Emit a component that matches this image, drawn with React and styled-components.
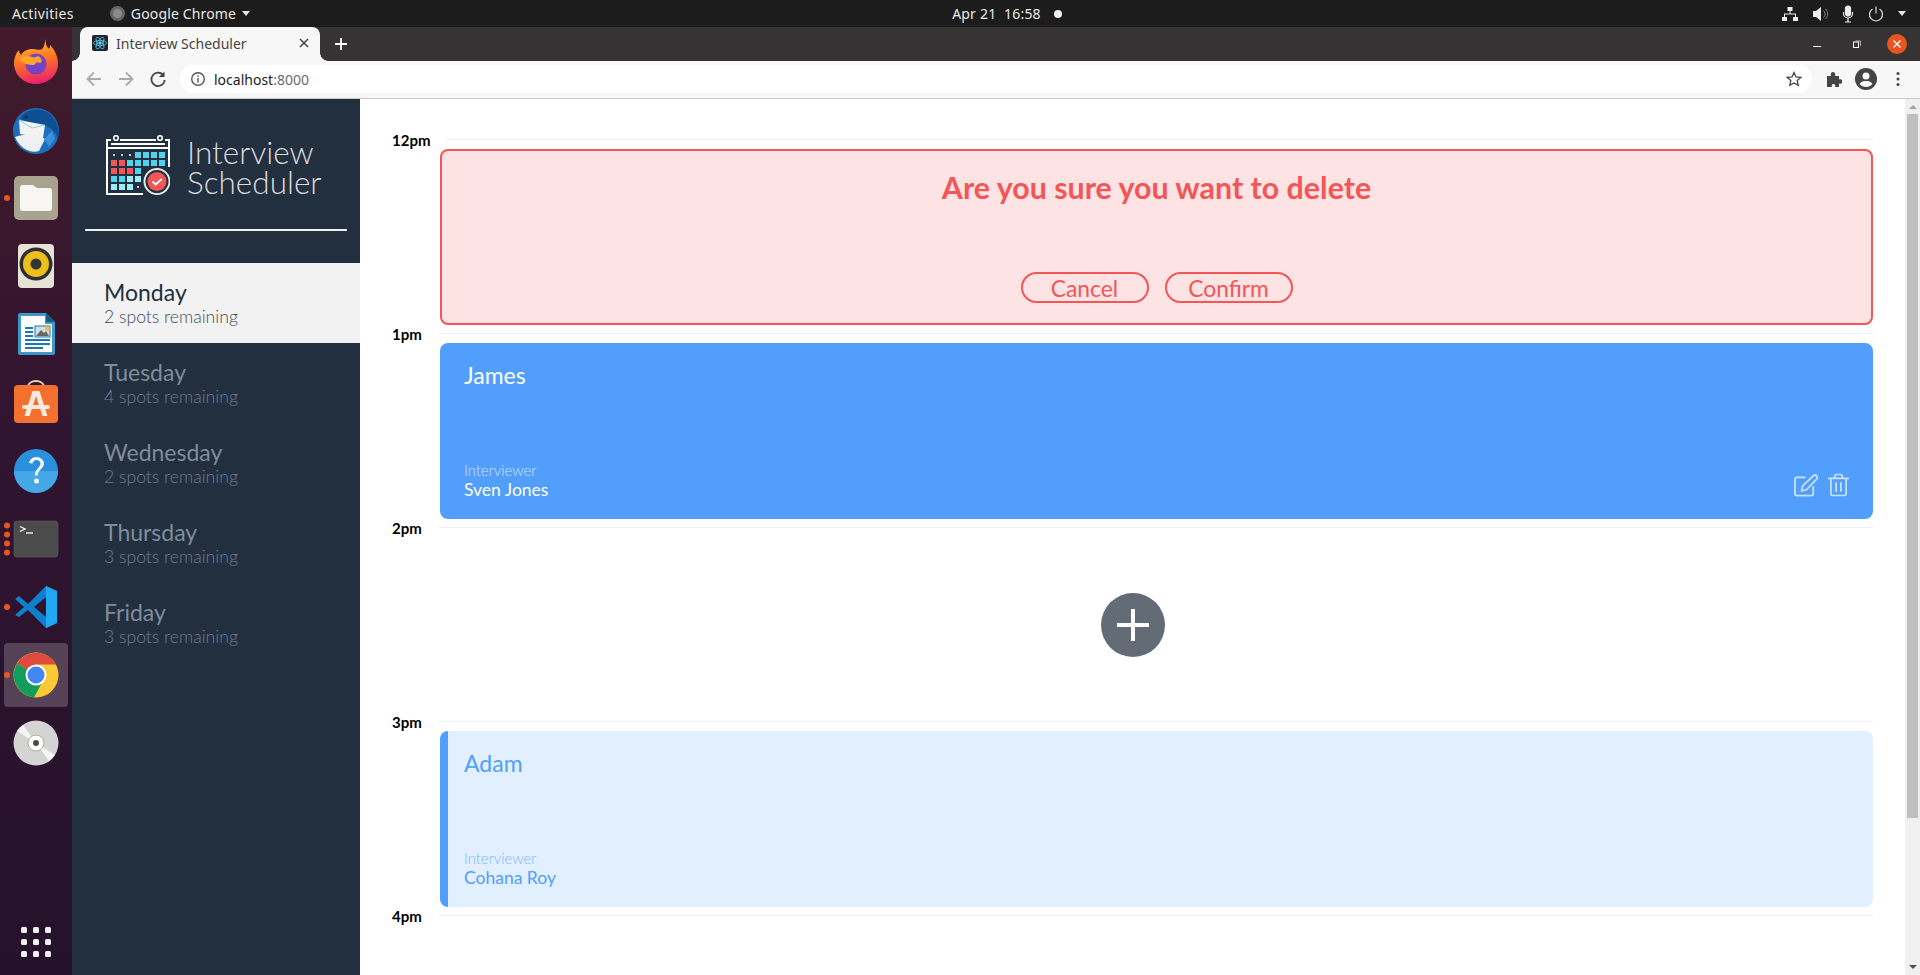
import React from "react";
import styled, { createGlobalStyle } from "styled-components";

const GlobalStyle = createGlobalStyle`
  html, body {
    margin: 0;
    padding: 0;
    height: 100%;
    overflow: hidden;
    background: #fff;
  }
  * { box-sizing: border-box; }
`;

const uiFont = `"Noto Sans", "Open Sans", sans-serif`;
const appFont = `Lato, "Noto Sans", sans-serif`;

const Desktop = styled.div`
  width: 1920px;
  height: 975px;
  display: flex;
  flex-direction: column;
  overflow: hidden;
`;

/* gnome top bar */
const TopBar = styled.div`
  height: 27px;
  background: #1c1c1c;
  color: #e8e8e8;
  font: 14px ${uiFont};
  display: grid;
  grid-template-columns: 1fr auto 1fr;
  align-items: center;
  padding: 0 12px;
  flex: none;
`;
const TopLeft = styled.div`
  display: flex;
  align-items: center;
  gap: 36px;
`;
const Activities = styled.span`
  letter-spacing: 0.35px;
`;
const AppName = styled.div`
  display: flex;
  align-items: center;
  gap: 6px;
  letter-spacing: 0.15px;
`;
const ChromeMono = styled.span`
  width: 15px;
  height: 15px;
  border-radius: 50%;
  background: #8a8a8a;
  border: 3px solid #666;
`;
const Caret = styled.span`
  width: 0;
  height: 0;
  border-left: 4.5px solid transparent;
  border-right: 4.5px solid transparent;
  border-top: 5px solid #e8e8e8;
`;
const Clock = styled.div`
  display: flex;
  align-items: center;
  gap: 8px;
  padding-left: 94px;
  letter-spacing: 0.2px;
  white-space: pre;
`;
const ClockDot = styled.span`
  width: 8px;
  height: 8px;
  margin-left: 5px;
  border-radius: 50%;
  background: #eee;
`;
const Tray = styled.div`
  display: flex;
  justify-content: flex-end;
  align-items: center;
  gap: 14px;
  padding-right: 2px;
`;

const Body = styled.div`
  flex: 1;
  display: flex;
  min-height: 0;
`;

/* launcher on the left */
const Dock = styled.div`
  width: 72px;
  flex: none;
  background: linear-gradient(180deg, #421a2b 0%, #301430 45%, #25122a 100%);
  display: flex;
  flex-direction: column;
  align-items: center;
  padding-top: 3px;
`;
const DockItem = styled.div`
  width: 64px;
  height: 64px;
  margin-bottom: 4.1px;
  flex: none;
  position: relative;
  display: flex;
  align-items: center;
  justify-content: center;
  border-radius: 4px;
  background: ${(p) => (p.$active ? "rgba(255,255,255,0.2)" : "transparent")};
`;
const RunDots = styled.div`
  position: absolute;
  left: 0;
  top: 50%;
  transform: translateY(-50%);
  display: flex;
  flex-direction: column;
  gap: 3px;
`;
const RunDot = styled.span`
  width: 6px;
  height: 6px;
  border-radius: 50%;
  background: #e95420;
`;
const AppGrid = styled.div`
  margin-top: auto;
  margin-bottom: 18px;
  display: grid;
  grid-template-columns: repeat(3, 6px);
  gap: 6px;
`;
const AppGridDot = styled.span`
  width: 6px;
  height: 6px;
  border-radius: 1.5px;
  background: #efefef;
`;

const Browser = styled.div`
  flex: 1;
  min-width: 0;
  display: flex;
  flex-direction: column;
`;
const TabStrip = styled.div`
  height: 34px;
  flex: none;
  background: #353333;
  display: flex;
  align-items: flex-end;
  padding-left: 8px;
`;
const Tab = styled.div`
  width: 240px;
  height: 34px;
  position: relative;
  background: #f7f7f7;
  border-radius: 8px 8px 0 0;
  display: flex;
  align-items: center;
  padding: 0 11px 2px 12px;
  color: #444;
  font: 14px ${uiFont};

  &::before,
  &::after {
    content: "";
    position: absolute;
    bottom: 0;
    width: 8px;
    height: 8px;
  }
  &::before {
    left: -8px;
    background: radial-gradient(circle at 0 0, transparent 7.5px, #f7f7f7 8px);
  }
  &::after {
    right: -8px;
    background: radial-gradient(circle at 100% 0, transparent 7.5px, #f7f7f7 8px);
  }
`;
const TabIcon = styled.span`
  width: 16px;
  height: 16px;
  border-radius: 2px;
  background: #20232a;
  margin-right: 8px;
  display: flex;
`;
const TabTitle = styled.span`
  flex: 1;
`;
const NewTab = styled.div`
  margin: 0 0 0 15px;
  align-self: center;
  display: flex;
`;
const WindowButtons = styled.div`
  margin-left: auto;
  align-self: center;
  display: flex;
  align-items: center;
  gap: 32px;
  padding-right: 13px;
`;
const CloseCircle = styled.span`
  width: 20px;
  height: 20px;
  margin-left: -6px;
  border-radius: 50%;
  background: #e95420;
  display: flex;
  align-items: center;
  justify-content: center;
`;
const Toolbar = styled.div`
  height: 38px;
  flex: none;
  background: #f7f7f7;
  border-bottom: 1px solid #c9c9c9;
  display: flex;
  align-items: center;
  padding: 0 0 1px 12px;
`;
const NavIcons = styled.div`
  display: flex;
  gap: 12px;
  margin-right: 12px;
`;
const AddressBar = styled.div`
  width: 1632px;
  height: 28px;
  border-radius: 14px;
  background: #fff;
  display: flex;
  align-items: center;
  padding: 0 10px;
  font: 14px ${uiFont};
  color: #222;
`;
const Host = styled.span`
  margin-left: 8px;
`;
const Port = styled.span`
  color: #6a6a6a;
`;
const Star = styled.span`
  margin-left: auto;
  display: flex;
`;
const ToolIcons = styled.div`
  display: flex;
  align-items: center;
  gap: 13px;
  margin-left: 14px;
`;

const Page = styled.div`
  flex: 1;
  min-height: 0;
  display: flex;
  background: #fff;
`;

/* app sidebar */
const Sidebar = styled.aside`
  width: 288px;
  flex: none;
  background: #222f3e;
  display: flex;
  flex-direction: column;
`;
const Brand = styled.div`
  margin: 0 13px;
  height: 132px;
  padding: 36px 0 0 21px;
  display: flex;
  align-items: flex-start;
  gap: 17px;
  border-bottom: 2px solid #f0f0f0;
`;
const BrandText = styled.div`
  font: 300 31.5px/30px ${appFont};
  color: #d8dadd;
  padding-top: 2px;
`;
const DayList = styled.ul`
  list-style: none;
  margin: 32px 0 0;
  padding: 0;
`;
const Day = styled.li`
  height: 80px;
  padding: 15px 0 0 32px;
  background: ${(p) => (p.$selected ? "#f2f2f2" : "transparent")};
  color: ${(p) => (p.$selected ? "#222f3e" : "#7f8c9c")};
`;
const DayName = styled.div`
  font: 400 23px/28px ${appFont};
`;
const Spots = styled.div`
  font: 300 17.6px/21px ${appFont};
  opacity: 0.85;
`;

/* schedule */
const Schedule = styled.main`
  flex: 1;
  min-width: 0;
  padding: 40px 32px 0 32px;
`;
const Slot = styled.section`
  height: 194px;
`;
const SlotHeader = styled.header`
  height: 10px;
  display: flex;
  align-items: flex-start;
`;
const Time = styled.h4`
  width: ${(p) => (p.$wide ? "55px" : "47px")};
  margin: -9px 0 0;
  font: 700 15px/20px ${appFont};
  color: #000;
`;
const Separator = styled.hr`
  flex: 1;
  margin: 0;
  border: 0;
  border-top: 1px solid #f0f0f0;
`;
const Card = styled.article`
  margin-left: 48px;
  height: 176px;
  border-radius: 8px;
`;
const ConfirmCard = styled(Card)`
  background: #fde3e3;
  border: 2px solid #f25656;
  color: #f25656;
  padding: 18px 0 0;
  display: flex;
  flex-direction: column;
  align-items: center;
`;
const ConfirmTitle = styled.h1`
  margin: 0;
  font: 700 30.4px/36px ${appFont};
`;
const ConfirmActions = styled.div`
  margin-top: auto;
  margin-bottom: 20px;
  display: flex;
  gap: 16px;
`;
const PillButton = styled.button`
  width: 128px;
  height: 31px;
  padding: 0;
  border: 2px solid #f25656;
  border-radius: 16px;
  background: transparent;
  color: #f25656;
  font: 400 22.8px/26px ${appFont};
`;
const BookedCard = styled(Card)`
  background: ${(p) => (p.$focused ? "#519efd" : "#e2effe")};
  color: ${(p) => (p.$focused ? "#fff" : "#519efd")};
  border-left: ${(p) => (p.$focused ? "0" : "8px solid #519efd")};
  padding: 18px 16px 18px ${(p) => (p.$focused ? "24px" : "16px")};
  display: flex;
  flex-direction: column;
  position: relative;
`;
const Student = styled.h2`
  margin: 0;
  font: 400 23px/28px ${appFont};
`;
const InterviewerBlock = styled.div`
  margin-top: auto;
`;
const InterviewerLabel = styled.div`
  font: 300 14.8px/20px ${appFont};
  opacity: 0.7;
`;
const InterviewerName = styled.div`
  font: 400 17.5px/20px ${appFont};
  padding-bottom: 1px;
`;
const CardActions = styled.div`
  position: absolute;
  right: 24px;
  bottom: 22px;
  display: flex;
  align-items: center;
  gap: 8px;
`;
const EmptySlotBody = styled.div`
  margin-left: 48px;
  height: 176px;
  display: flex;
  justify-content: center;
  align-items: center;
  padding-right: 48px;
`;
const AddCircle = styled.div`
  width: 64px;
  height: 64px;
  border-radius: 50%;
  background: #636b76;
  display: flex;
  align-items: center;
  justify-content: center;
`;

const Scrollbar = styled.div`
  width: 15px;
  flex: none;
  background: #f0f0f0;
  display: flex;
  flex-direction: column;
  align-items: center;
`;
const ScrollArrow = styled.span`
  width: 0;
  height: 0;
  border-left: 4px solid transparent;
  border-right: 4px solid transparent;
  ${(p) =>
    p.$down
      ? `margin: auto 0 6px; border-top: 4px solid #505050;`
      : `margin-top: 6px; border-bottom: 4px solid #a3a3a3;`}
`;
const ScrollThumb = styled.div`
  width: 11px;
  height: 704px;
  margin-top: 5px;
  background: #bfbfbf;
`;

const Firefox = () => (
  <svg width="46" height="46" viewBox="0 0 46 46">
    <defs>
      <linearGradient id="ff" x1="0.3" y1="0" x2="0.5" y2="1">
        <stop offset="0" stopColor="#ffc02e" />
        <stop offset="0.45" stopColor="#ff7a22" />
        <stop offset="1" stopColor="#ea1f6e" />
      </linearGradient>
    </defs>
    <path d="M33 0c-1 4 0 7 3 10 1-2 1-3 1-4 5 5 8 12 8 19 0 11-10 20-22 20S1 36 1 24c0-5 2-10 5-13 0 2 1 4 2 5 2-4 7-6 11-6 6 0 10 3 12-3 .5-2 1-5 2-7z" fill="url(#ff)" />
    <circle cx="23" cy="25" r="10.500" fill="#7542c8" />
    <path d="M6 20c4-3 9-4 13-2 2 1 4 0 6-1 4 2 5 6 2 7-3-2-4 0-6 2-5 0-11-1-15-6z" fill="#ffa52a" />
  </svg>
);
const Thunderbird = () => (
  <svg width="50" height="50" viewBox="0 0 50 50">
    <circle cx="25" cy="26" r="23" fill="#1d6fbd" />
    <path d="M9 13C15 4 30 1 40 10 46 16 49 25 47 33 43 24 34 18 24 18 18 18 12 16 9 13z" fill="#0c4f95" />
    <circle cx="15" cy="12" r="1.200" fill="#111" />
    <path d="M8 15l26 5-2 13L9 29z" fill="#f3f3f3" />
    <path d="M8 15l13 8 13-3" fill="none" stroke="#9cc" strokeWidth="1" />
    <path d="M4 32c8-3 22-4 30 2l-6 12C18 49 8 42 4 32z" fill="#eef0f2" />
    <path d="M33 34l8-8 3 8-6 8z" fill="#3a8fdc" />
  </svg>
);
const Files = () => (
  <svg width="46" height="46" viewBox="0 0 46 46">
    <rect x="1" y="1" width="44" height="44" rx="5" fill="#a9a28f" />
    <path d="M7 12c0-1 1-2 2-2h11l4 3h13c1 0 2 1 2 2v19c0 1-1 2-2 2H9c-1 0-2-1-2-2z" fill="#f7f6f3" />
  </svg>
);
const Rhythmbox = () => (
  <svg width="46" height="46" viewBox="0 0 46 46">
    <rect x="5" y="1" width="36" height="44" rx="4" fill="#e6e2d6" />
    <circle cx="23" cy="21" r="16.500" fill="#2f2f2f" />
    <circle cx="23" cy="21" r="13" fill="#edbf1c" />
    <circle cx="23" cy="21" r="5.500" fill="#333" />
  </svg>
);
const Writer = () => (
  <svg width="46" height="46" viewBox="0 0 46 46">
    <path d="M5 4c0-1 1-2 2-2h26l9 9v31c0 1-1 2-2 2H7c-1 0-2-1-2-2z" fill="#3d98c9" />
    <path d="M8 5h24v8h7v28H8z" fill="#fff" />
    <path d="M33 2l9 9h-9z" fill="#0f5e8c" />
    <path d="M12 16h8v2h-8zM12 20h8v2h-8zM12 24h8v2h-8zM12 28h25v2H12zM12 32h25v2H12zM12 36h18v2H12z" fill="#1878b3" />
    <rect x="22" y="15" width="15" height="11" fill="#d6dde0" stroke="#1878b3" strokeWidth="1" />
    <path d="M23 25l5-6 3 3 2-2 3 5z" fill="#666" />
    <rect x="32" y="15.500" width="4.500" height="4" fill="#eec33c" />
  </svg>
);
const Software = () => (
  <svg width="46" height="46" viewBox="0 0 46 46">
    <path d="M15 8c0-8 16-8 16 0" fill="none" stroke="#f2cfa9" strokeWidth="1.800" />
    <rect x="1" y="6" width="44" height="38" rx="4" fill="#f4702f" />
    <path d="M19.500 12h7l8 25h-5l-6.500-20-6.500 20h-5z" fill="#fbe9df" />
    <rect x="9" y="26" width="28" height="4" rx="2" fill="#fbe9df" />
  </svg>
);
const Help = () => (
  <svg width="46" height="46" viewBox="0 0 46 46">
    <circle cx="23" cy="23" r="22" fill="#2a8fdc" />
    <path d="M1 23a22 22 0 0 0 44 0z" fill="#45a7e6" />
    <path d="M16 15c1-4 4-6 7.500-6 4 0 7.500 3 7.500 6.500 0 5-6 6-6.500 12h-2.500c0-7 5.500-8 5.500-12 0-2-2-3.500-4-3.500s-3.500 1-4 3.500z" fill="#f4f9fd" />
    <circle cx="23.500" cy="33" r="2.500" fill="#f4f9fd" />
  </svg>
);
const Terminal = () => (
  <svg width="46" height="46" viewBox="0 0 46 46">
    <rect x="1" y="5" width="44" height="36" rx="3" fill="#4b4b4b" stroke="#666" strokeWidth="0.500" />
    <path d="M7 10.500l5 2.500-5 2.500" fill="none" stroke="#fff" strokeWidth="1.300" />
    <path d="M13 17h7" stroke="#fff" strokeWidth="1.300" />
  </svg>
);
const VSCode = () => (
  <svg width="46" height="46" viewBox="0 0 46 46">
    <path d="M33 2l11 5v32l-11 5L15 26 6 33l-4-2 9-8-9-8 4-3 9 8z" fill="#0f7fcc" />
    <path d="M33 2l11 5v32l-11 5z" fill="#20a9f2" />
    <path d="M33 13v20l-12-10z" fill="#2f1430" />
  </svg>
);
const ChromeLogo = () => (
  <svg width="46" height="46" viewBox="0 0 46 46">
    <circle cx="23" cy="23" r="22.500" fill="#fcc934" />
    <path d="M23 23L4 11.500A22.500 22.500 0 0 1 43 12.500H23z" fill="#dd4b3e" />
    <path d="M23 23L4 11.500A22.500 22.500 0 0 0 21 45.400L32 25z" fill="#129e5a" />
    <circle cx="23" cy="23" r="10.500" fill="#fff" />
    <circle cx="23" cy="23" r="8.500" fill="#4285f4" />
  </svg>
);
const Disc = () => (
  <svg width="46" height="46" viewBox="0 0 46 46">
    <circle cx="23" cy="23" r="22.500" fill="#d4d4d4" />
    <path d="M23 23L4 11a22.500 22.500 0 0 1 6-6zM23 23l19 12a22.500 22.500 0 0 1-6 6z" fill="#f6f6f6" />
    <circle cx="23" cy="23" r="8" fill="#fff" stroke="#b3a99a" />
    <circle cx="23" cy="23" r="3" fill="#4a4a4a" />
  </svg>
);

const ReactTab = () => (
  <svg width="16" height="16" viewBox="0 0 16 16" fill="none" stroke="#61dafb" strokeWidth="0.700">
    <ellipse cx="8" cy="8" rx="6.500" ry="2.600" />
    <ellipse cx="8" cy="8" rx="6.500" ry="2.600" transform="rotate(60 8 8)" />
    <ellipse cx="8" cy="8" rx="6.500" ry="2.600" transform="rotate(120 8 8)" />
    <circle cx="8" cy="8" r="1.300" fill="#61dafb" />
  </svg>
);

const Arrow = ({ flip, color }) => (
  <svg width="20" height="20" viewBox="0 0 20 20" fill="none" stroke={color} strokeWidth="1.800" style={flip ? { transform: "scaleX(-1)" } : undefined}>
    <path d="M17 10H4M10 3.500L3.500 10l6.500 6.500" />
  </svg>
);
const Reload = () => (
  <svg width="20" height="20" viewBox="0 0 20 20" fill="none" stroke="#444" strokeWidth="1.800">
    <path d="M15.500 6.500A6.700 6.700 0 1 0 16.700 11" />
    <path d="M16.500 2.500v5.500h-5.500z" fill="#444" stroke="none" />
  </svg>
);
const Info = () => (
  <svg width="16" height="16" viewBox="0 0 16 16" fill="none" stroke="#555" strokeWidth="1.400">
    <circle cx="8" cy="8" r="6.300" />
    <path d="M8 7v4.500M8 4.300v1.500" />
  </svg>
);
const StarIcon = () => (
  <svg width="16" height="16" viewBox="0 0 16 16" fill="none" stroke="#444" strokeWidth="1.300">
    <path d="M8 1.500l2 4.400 4.800.5-3.600 3.200 1 4.700L8 11.900l-4.200 2.400 1-4.700L1.200 6.400 6 5.900z" />
  </svg>
);
const Puzzle = () => (
  <svg width="16" height="16" viewBox="0 0 16 16" fill="#444">
    <path d="M1 5h4c-1-3 1-4 2-4s3 1 2 4h4v3.500c3-1 3.500 1 3.500 2s-.5 3-3.500 2V16H9c1-2.500-1-3-1.500-3S5 13.500 6 16H1z" />
  </svg>
);
const Avatar = () => (
  <svg width="22" height="22" viewBox="0 0 22 22">
    <circle cx="11" cy="11" r="11" fill="#444" />
    <circle cx="11" cy="8" r="3.500" fill="#f7f7f7" />
    <path d="M4.500 16c1.500-2.500 4-3 6.500-3s5 .5 6.500 3c-1.500 2-4 3-6.500 3s-5-1-6.500-3z" fill="#f7f7f7" />
  </svg>
);
const Dots = () => (
  <svg width="16" height="16" viewBox="0 0 16 16" fill="#444">
    <circle cx="8" cy="2.500" r="1.500" />
    <circle cx="8" cy="8" r="1.500" />
    <circle cx="8" cy="13.500" r="1.500" />
  </svg>
);

const Logo = () => {
  const cells = [
    ["d", "d", "d", "b", "b", "b", "b"],
    ["r", "r", "b", "b", "b", "b", "b"],
    ["r", "r", "r", "b", "", "", ""],
    ["b", "b", "l", "l", "", "", ""],
    ["l", "l", "l", "d", "", "", ""],
  ];
  const colors = { r: "#f25656", b: "#4fd3ef", l: "#9cecfc" };
  return (
    <svg width="64" height="60" viewBox="0 0 64 60" fill="none">
      <path d="M37 59H1V5h62v27" stroke="#fff" strokeWidth="2" />
      <path d="M1 13h62" stroke="#fff" strokeWidth="2" />
      <path d="M5 9h54M14 5h36" stroke="#fff" strokeWidth="2" />
      <path d="M5 5h9M50 5h9" stroke="#222f3e" strokeWidth="2" />
      <circle cx="10" cy="3" r="2.300" stroke="#fff" strokeWidth="1.600" fill="#222f3e" />
      <circle cx="54" cy="3" r="2.300" stroke="#fff" strokeWidth="1.600" fill="#222f3e" />
      {cells.map((row, y) =>
        row.map((c, x) =>
          c === "d" ? (
            <circle key={`${x}-${y}`} cx={8 + x * 8} cy={20 + y * 8} r="1" fill="#fff" />
          ) : c ? (
            <rect key={`${x}-${y}`} x={5 + x * 8} y={17 + y * 8} width="6" height="6" fill={colors[c]} />
          ) : null
        )
      )}
      <circle cx="51" cy="46.500" r="12.500" fill="#222f3e" stroke="#e6e6e6" strokeWidth="2" />
      <circle cx="51" cy="46.500" r="9.500" fill="#f25656" />
      <path d="M46.500 46.500l3.200 3 6-5.500" stroke="#fff" strokeWidth="2" />
    </svg>
  );
};

const EditIcon = () => (
  <svg width="27" height="24" viewBox="0 0 28 24" fill="none" stroke="#fff" strokeWidth="1.800" opacity="0.7">
    <path d="M13 4H4a2 2 0 0 0-2 2v15a2 2 0 0 0 2 2h15a2 2 0 0 0 2-2v-8" />
    <path d="M9 18l1-5L21 2.500c1-1 2.500-1 3.500 0s1 2.500 0 3.500L14 17z" />
  </svg>
);
const TrashIcon = () => (
  <svg width="21" height="24" viewBox="0 0 22 24" fill="none" stroke="#fff" strokeWidth="1.800" opacity="0.7">
    <path d="M0 5h22M7 5V3a2 2 0 0 1 2-2h4a2 2 0 0 1 2 2v2M3 5v16a2 2 0 0 0 2 2h12a2 2 0 0 0 2-2V5M8.500 9v10M13.500 9v10" />
  </svg>
);

const dockApps = [
  { id: "firefox", Icon: Firefox },
  { id: "thunderbird", Icon: Thunderbird },
  { id: "files", Icon: Files, dots: 1 },
  { id: "rhythmbox", Icon: Rhythmbox },
  { id: "writer", Icon: Writer },
  { id: "software", Icon: Software },
  { id: "help", Icon: Help },
  { id: "terminal", Icon: Terminal, dots: 4 },
  { id: "vscode", Icon: VSCode, dots: 1 },
  { id: "chrome", Icon: ChromeLogo, dots: 1, active: true },
  { id: "disc", Icon: Disc },
];

const days = [
  { name: "Monday", spots: 2, selected: true },
  { name: "Tuesday", spots: 4 },
  { name: "Wednesday", spots: 2 },
  { name: "Thursday", spots: 3 },
  { name: "Friday", spots: 3 },
];

const SlotRow = ({ time, wide, children }) => (
  <Slot>
    <SlotHeader>
      <Time $wide={wide}>{time}</Time>
      <Separator />
    </SlotHeader>
    {children}
  </Slot>
);

export default function App() {
  return (
    <Desktop>
      <GlobalStyle />
      <TopBar>
        <TopLeft>
          <Activities>Activities</Activities>
          <AppName>
            <ChromeMono />
            Google Chrome
            <Caret />
          </AppName>
        </TopLeft>
        <Clock>
          Apr 21  16:58
          <ClockDot />
        </Clock>
        <Tray>
          <svg width="16" height="16" viewBox="0 0 16 16" fill="#eee">
            <path d="M5.500 1h5v4h-2v2.500H14V11h2v4h-5v-4h2V8.500H3V11h2v4H0v-4h2V7.500h5.500V5h-2z" />
          </svg>
          <svg width="16" height="16" viewBox="0 0 16 16" fill="#eee">
            <path d="M1 5h3l5-4v14l-5-4H1z" />
            <path d="M11.500 4.500c2 2 2 5 0 7M13.500 3c3 3 3 7 0 10" fill="none" stroke="#888" />
          </svg>
          <svg width="12" height="18" viewBox="0 0 12 18" fill="none" stroke="#eee" strokeWidth="1.200">
            <rect x="3.500" y="1" width="5" height="10" rx="2.500" fill="#eee" />
            <path d="M1.500 7v1.500a4.500 4.500 0 0 0 9 0V7M6 13v4M3 17h6" />
          </svg>
          <svg width="16" height="16" viewBox="0 0 16 16" fill="none" stroke="#ddd" strokeWidth="1.200">
            <path d="M4.500 3a6.500 6.500 0 1 0 7 0M8 0.500v7" />
          </svg>
          <Caret />
        </Tray>
      </TopBar>
      <Body>
        <Dock>
          {dockApps.map(({ id, Icon, dots, active }) => (
            <DockItem key={id} $active={active}>
              {dots ? (
                <RunDots>
                  {Array.from({ length: dots }).map((_, i) => (
                    <RunDot key={i} />
                  ))}
                </RunDots>
              ) : null}
              <Icon />
            </DockItem>
          ))}
          <AppGrid>
            {Array.from({ length: 9 }).map((_, i) => (
              <AppGridDot key={i} />
            ))}
          </AppGrid>
        </Dock>
        <Browser>
          <TabStrip>
            <Tab>
              <TabIcon>
                <ReactTab />
              </TabIcon>
              <TabTitle>Interview Scheduler</TabTitle>
              <svg width="10" height="10" viewBox="0 0 10 10" stroke="#444" strokeWidth="1.500">
                <path d="M1 1l8 8M9 1l-8 8" />
              </svg>
            </Tab>
            <NewTab>
              <svg width="12" height="12" viewBox="0 0 12 12" stroke="#fff" strokeWidth="1.800">
                <path d="M6 0v12M0 6h12" />
              </svg>
            </NewTab>
            <WindowButtons>
              <svg width="8" height="8" viewBox="0 0 8 8" stroke="#fff">
                <path d="M0 6.500h8" />
              </svg>
              <svg width="8" height="8" viewBox="0 0 8 8" fill="none" stroke="#fff">
                <rect x="0.500" y="2" width="5" height="5.500" />
                <path d="M2.500 1h5v5" opacity="0.6" />
              </svg>
              <CloseCircle>
                <svg width="8" height="8" viewBox="0 0 8 8" stroke="#fff" strokeWidth="1.300">
                  <path d="M0.500 0.500l7 7M7.500 0.500l-7 7" />
                </svg>
              </CloseCircle>
            </WindowButtons>
          </TabStrip>
          <Toolbar>
            <NavIcons>
              <Arrow color="#aaa" />
              <Arrow color="#aaa" flip />
              <Reload />
            </NavIcons>
            <AddressBar>
              <Info />
              <Host>localhost</Host>
              <Port>:8000</Port>
              <Star>
                <StarIcon />
              </Star>
            </AddressBar>
            <ToolIcons>
              <Puzzle />
              <Avatar />
              <Dots />
            </ToolIcons>
          </Toolbar>
          <Page>
            <Sidebar>
              <Brand>
                <Logo />
                <BrandText>
                  Interview
                  <br />
                  Scheduler
                </BrandText>
              </Brand>
              <DayList>
                {days.map((d) => (
                  <Day key={d.name} $selected={d.selected}>
                    <DayName>{d.name}</DayName>
                    <Spots>{d.spots} spots remaining</Spots>
                  </Day>
                ))}
              </DayList>
            </Sidebar>
            <Schedule>
              <SlotRow time="12pm" wide>
                <ConfirmCard>
                  <ConfirmTitle>Are you sure you want to delete</ConfirmTitle>
                  <ConfirmActions>
                    <PillButton>Cancel</PillButton>
                    <PillButton>Confirm</PillButton>
                  </ConfirmActions>
                </ConfirmCard>
              </SlotRow>
              <SlotRow time="1pm">
                <BookedCard $focused>
                  <Student>James</Student>
                  <InterviewerBlock>
                    <InterviewerLabel>Interviewer</InterviewerLabel>
                    <InterviewerName>Sven Jones</InterviewerName>
                  </InterviewerBlock>
                  <CardActions>
                    <EditIcon />
                    <TrashIcon />
                  </CardActions>
                </BookedCard>
              </SlotRow>
              <SlotRow time="2pm">
                <EmptySlotBody>
                  <AddCircle>
                    <svg width="32" height="32" viewBox="0 0 32 32" stroke="#fff" strokeWidth="4">
                      <path d="M16 0v32M0 16h32" />
                    </svg>
                  </AddCircle>
                </EmptySlotBody>
              </SlotRow>
              <SlotRow time="3pm">
                <BookedCard>
                  <Student>Adam</Student>
                  <InterviewerBlock>
                    <InterviewerLabel>Interviewer</InterviewerLabel>
                    <InterviewerName>Cohana Roy</InterviewerName>
                  </InterviewerBlock>
                </BookedCard>
              </SlotRow>
              <SlotRow time="4pm" />
            </Schedule>
            <Scrollbar>
              <ScrollArrow />
              <ScrollThumb />
              <ScrollArrow $down />
            </Scrollbar>
          </Page>
        </Browser>
      </Body>
    </Desktop>
  );
}
